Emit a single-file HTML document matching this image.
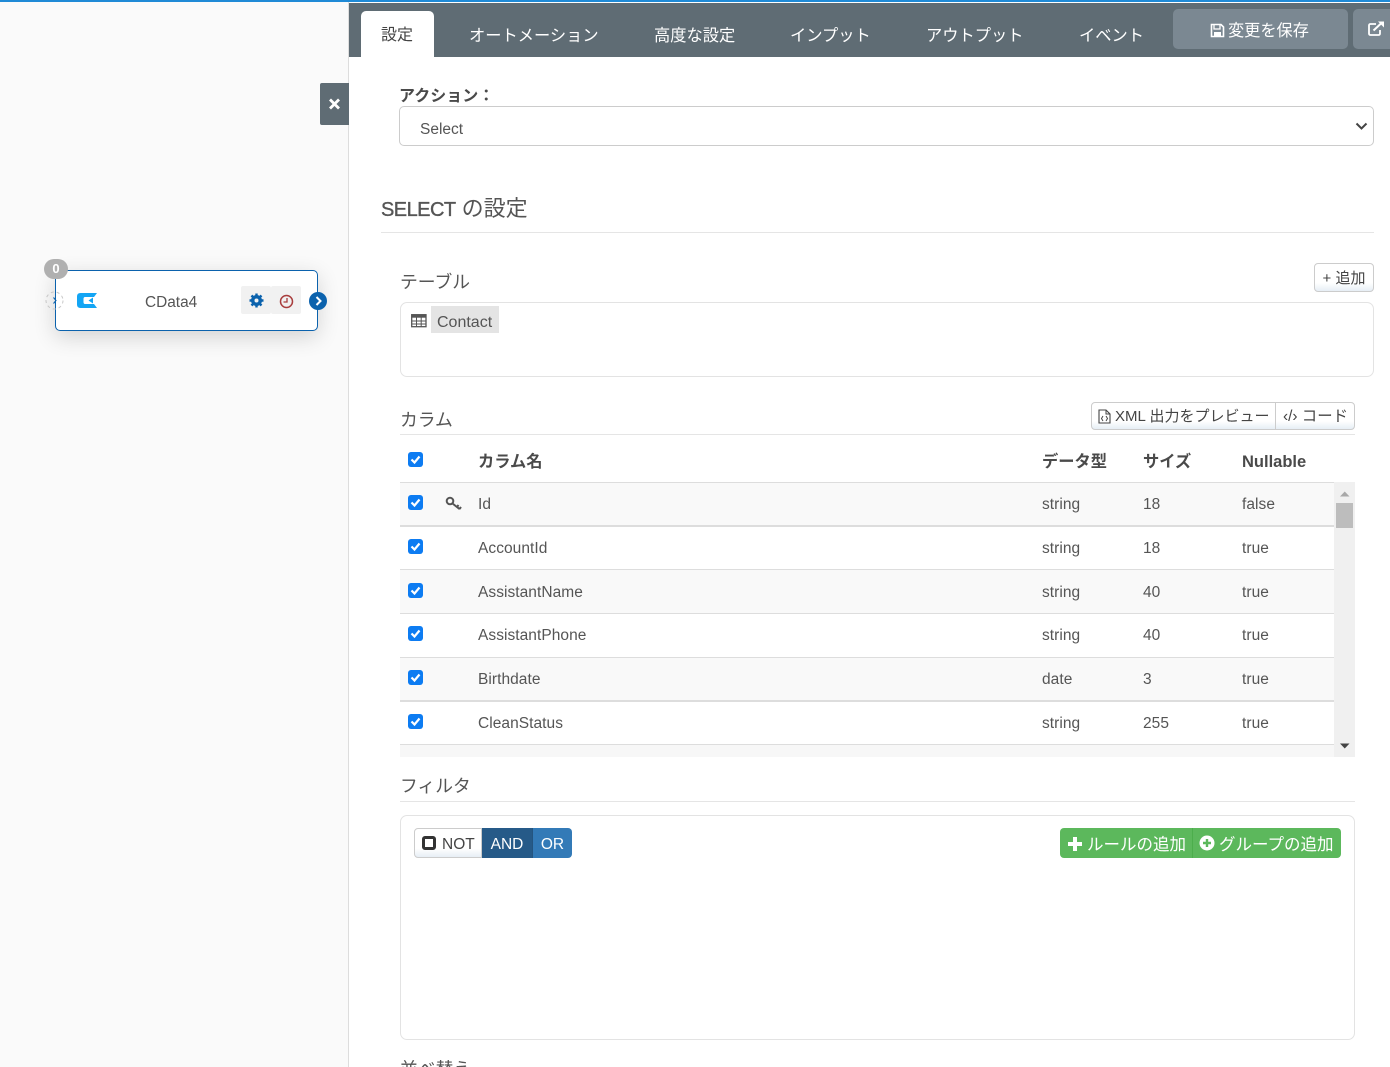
<!DOCTYPE html>
<html lang="ja"><head><meta charset="utf-8"><title>CData</title>
<style>
*{box-sizing:border-box}
html{margin:0;padding:0;width:1390px;height:1067px;overflow:hidden}
body{margin:0;padding:0;width:1390px;height:1067px;position:relative;overflow:hidden;background:#fff;color:#555;font-family:"Liberation Sans","Noto Sans CJK JP",sans-serif;font-size:15px}
.a{position:absolute;white-space:nowrap}
.tab{position:absolute;top:26px;color:#fff;font-size:16.25px;line-height:20px;white-space:nowrap}
.lbl{position:absolute;font-size:17.8px;line-height:24px;color:#555;white-space:nowrap}
.hr{position:absolute;height:1px;background:#e5e5e5}
.box{position:absolute;background:#fff;border:1px solid #e3e3e3;border-radius:7px}
.cb{position:absolute;left:408px;width:15px;height:15px;background:#0d7cf2;border-radius:3px}
.cb svg{position:absolute;left:0;top:0}
.row{position:absolute;left:400px;width:934px;border-bottom:1px solid #ddd}
.t{position:absolute;font-size:15.5px;line-height:20px;color:#555;white-space:nowrap;letter-spacing:.05px}
.th{position:absolute;font-size:16.25px;line-height:20px;font-weight:bold;color:#4a4a4a;white-space:nowrap}
.btn{position:absolute;background:linear-gradient(#fff 70%,#e6eef5);border:1px solid #ccc;color:#444;white-space:nowrap}
</style></head><body>

<!-- left canvas -->
<div class="a" style="left:0;top:0;width:349px;height:1067px;background:#fafafa;border-right:1px solid #ddd"></div>
<div class="a" style="left:0;top:0;width:1390px;height:2px;background:#1f8ad6"></div>

<div class="a" style="left:320px;top:83px;width:29px;height:42px;background:#5f6c74;border-radius:2px 0 0 2px">
<svg width="29" height="42" style="position:absolute;left:0;top:0"><path d="M10 16.500L19 25.500M19 16.500L10 25.500" stroke="#fff" stroke-width="2.800" fill="none"/></svg></div>

<!-- node -->
<div class="a" style="left:55px;top:270px;width:263px;height:61px;background:#fff;border:1px solid #0b62ad;border-radius:5px;box-shadow:0 6px 22px rgba(0,0,0,.16)"></div>
<div class="a" style="left:44px;top:259px;width:24px;height:20px;border-radius:10px;background:#b0b0b0;color:#fff;font-size:13px;font-weight:bold;line-height:20px;text-align:center">0</div>
<svg class="a" style="left:45px;top:291px" width="20" height="20"><circle cx="9.500" cy="9.500" r="8.500" fill="none" stroke="#c8c8c8" stroke-dasharray="3 3"/><path d="M8.500 6.500L11 9.500L8.500 12.500" stroke="#0b62ad" stroke-width="1.100" fill="none"/></svg>
<svg class="a" style="left:76px;top:292px" width="22" height="18"><path d="M4.500 1H21L18 5H9Q7.500 5 7.500 7V10Q7.500 12 9 12H18L21 16H4.500Q1 16 1 12.500V4.500Q1 1 4.500 1Z" fill="#13a5f4"/><path d="M12.500 8.500L17 5.500V11.500Z" fill="#13a5f4"/></svg>
<div class="a" style="left:145px;top:293px;font-size:15.4px;line-height:19px;color:#555">CData4</div>
<div class="a" style="left:241px;top:286px;width:30px;height:28px;background:#f1f1f1;border-radius:2px"></div>
<div class="a" style="left:271px;top:286px;width:30px;height:28px;background:#f1f1f1;border-radius:2px"></div>
<svg class="a" style="left:249px;top:293px" width="15" height="15" viewBox="0 0 15 15"><circle cx="7.500" cy="7.500" r="4" fill="none" stroke="#0b62ad" stroke-width="3"/><path d="M7.500 .5V14.500M.5 7.500H14.500M2.500 2.500L12.500 12.500M12.500 2.500L2.500 12.500" stroke="#0b62ad" stroke-width="2.400"/><circle cx="7.500" cy="7.500" r="2" fill="#f1f1f1"/></svg>
<svg class="a" style="left:279px;top:294px" width="15" height="15" viewBox="0 0 15 15"><circle cx="7.500" cy="7.500" r="6" fill="none" stroke="#a83c3c" stroke-width="1.500"/><path d="M8 4V8H4.500" fill="none" stroke="#a83c3c" stroke-width="1.300"/></svg>
<svg class="a" style="left:309px;top:292px" width="18" height="18"><circle cx="9" cy="9" r="9" fill="#0b62ad"/><path d="M7.500 5L11.500 9L7.500 13" stroke="#fff" stroke-width="2" fill="none"/></svg>

<!-- tab bar -->
<div class="a" style="left:349px;top:3px;width:1041px;height:54px;background:#5f6c74"></div>
<div class="a" style="left:361px;top:11px;width:73px;height:46px;background:#fff;border-radius:5px 5px 0 0"></div>
<div class="tab" style="left:381px;color:#444;font-size:16px">設定</div>
<div class="tab" style="left:469px">オートメーション</div>
<div class="tab" style="left:654px">高度な設定</div>
<div class="tab" style="left:790px">インプット</div>
<div class="tab" style="left:926px">アウトプット</div>
<div class="tab" style="left:1079px">イベント</div>
<div class="a" style="left:1173px;top:9px;width:175px;height:40px;background:#7b8892;border-radius:5px"></div>
<svg class="a" style="left:1210px;top:23px" width="15" height="15" viewBox="0 0 15 15"><path d="M1.500 1.500H11L13.500 4V13.500H1.500Z" fill="none" stroke="#fff" stroke-width="1.600"/><path d="M4 2V6H10V2" fill="none" stroke="#fff" stroke-width="1.300"/><rect x="4" y="9" width="7" height="4" fill="#fff"/></svg>
<div class="a" style="left:1228px;top:21px;color:#fff;font-size:16.2px;line-height:20px">変更を保存</div>
<div class="a" style="left:1353px;top:9px;width:37px;height:40px;background:#7b8892;border-radius:5px 0 0 5px"></div>
<svg class="a" style="left:1368px;top:21px" width="17" height="15" viewBox="0 0 17 15"><path d="M8 3H2.500Q1 3 1 4.500V12.500Q1 14 2.500 14H10.500Q12 14 12 12.500V9" fill="none" stroke="#fff" stroke-width="1.800"/><path d="M5.500 9.500L13 2.500" stroke="#fff" stroke-width="2"/><path d="M10 .5H16V6.500Z" fill="#fff"/></svg>

<!-- action -->
<div class="a" style="left:399px;top:86px;font-size:16px;line-height:21px;font-weight:bold;color:#4a4a4a">アクション：</div>
<div class="a" style="left:399px;top:106px;width:975px;height:40px;border:1px solid #ccc;border-radius:5px;background:#fff"></div>
<div class="a" style="left:420px;top:120px;font-size:15.500px;line-height:20px;color:#555">Select</div>
<svg class="a" style="left:1355px;top:122px" width="13" height="9"><path d="M1.500 1.500L6.500 6.500L11.500 1.500" stroke="#444" stroke-width="2" fill="none"/></svg>

<div class="a" style="left:381px;top:194px;font-size:22px;line-height:29px;color:#555"><span style="font-size:20px;letter-spacing:-.55px;-webkit-text-stroke:.35px #555">SELECT</span> の設定</div>
<div class="hr" style="left:381px;top:232px;width:993px"></div>

<!-- table -->
<div class="lbl" style="left:400px;top:270px">テーブル</div>
<div class="btn" style="left:1314px;top:263px;width:60px;height:29px;border-radius:4px;font-size:15px;line-height:29px;text-align:center">+ 追加</div>
<div class="box" style="left:400px;top:302px;width:974px;height:75px"></div>
<svg class="a" style="left:411px;top:314px" width="16" height="14" viewBox="0 0 16 14"><rect x=".7" y=".7" width="14.300" height="12" fill="none" stroke="#555" stroke-width="1.300"/><rect x=".7" y=".7" width="14.300" height="3" fill="#555"/><path d="M.7 7H15M.7 10H15M5.500 3V13M10.200 3V13" stroke="#555" stroke-width="1"/></svg>
<div class="a" style="left:431px;top:306px;width:68px;height:27px;background:#e4e4e4;color:#555;font-size:16px;line-height:31px;padding-left:6px;overflow:hidden"><span style="position:relative;top:1px">Contact</span></div>

<!-- columns -->
<div class="lbl" style="left:400px;top:408px">カラム</div>
<div class="btn" style="left:1091px;top:402px;width:185px;height:28px;border-radius:4px 0 0 4px;font-size:15px;line-height:28px;padding-left:23px">XML 出力をプレビュー</div>
<svg class="a" style="left:1098px;top:409px" width="13" height="15" viewBox="0 0 13 15"><path d="M1 1H8L12 5V14H1Z" fill="none" stroke="#444" stroke-width="1.100"/><path d="M8 1V5H12M5 7L3.500 9.500L5 12M8 7L9.500 9.500L8 12" fill="none" stroke="#444" stroke-width="1"/></svg>
<div class="btn" style="left:1275px;top:402px;width:80px;height:28px;border-radius:0 4px 4px 0;font-size:15.4px;line-height:28px;padding-left:7px">‹/› コード</div>
<div class="hr" style="left:400px;top:434px;width:955px"></div>

<div class="cb" style="top:452px"><svg width="15" height="15"><path d="M3.500 7.500L6.500 10.500L11.500 4.500" stroke="#fff" stroke-width="2.200" fill="none"/></svg></div>
<div class="th" style="left:478px;top:452px">カラム名</div>
<div class="th" style="left:1042px;top:452px">データ型</div>
<div class="th" style="left:1143px;top:452px">サイズ</div>
<div class="th" style="left:1242px;top:452px;font-size:16.5px">Nullable</div>

<div class="a" style="left:400px;top:482px;width:934px;height:1px;background:#ddd"></div>
<div class="row" style="top:483px;height:44px;background:#f9f9f9;border-bottom:2px solid #ddd"></div>
<div class="row" style="top:527px;height:43px"></div>
<div class="row" style="top:570px;height:44px;background:#f9f9f9"></div>
<div class="row" style="top:614px;height:44px"></div>
<div class="row" style="top:658px;height:44px;background:#f9f9f9;border-bottom:2px solid #ddd"></div>
<div class="row" style="top:702px;height:43px"></div>
<div class="a" style="left:400px;top:745px;width:934px;height:12px;background:#f7f7f7"></div>
<div class="a" style="left:1334px;top:482px;width:21px;height:275px;background:#f0f0f0"></div>
<div class="a" style="left:1336px;top:503px;width:17px;height:25px;background:#bdbdbd"></div>
<svg class="a" style="left:1340px;top:491px" width="10" height="6"><path d="M0 5.500H9.500L4.750 .5Z" fill="#a8a8a8"/></svg>
<svg class="a" style="left:1340px;top:743px" width="10" height="6"><path d="M0 .5H9.500L4.750 5.500Z" fill="#444"/></svg>

<div class="cb" style="top:495px"><svg width="15" height="15"><path d="M3.500 7.500L6.500 10.500L11.500 4.500" stroke="#fff" stroke-width="2.200" fill="none"/></svg></div>
<svg class="a" style="left:445px;top:496px" width="17" height="15" viewBox="0 0 17 15"><circle cx="5" cy="5" r="3.300" fill="none" stroke="#555" stroke-width="2"/><path d="M7.500 7.500L14.500 13M12 11L13.500 9M14.500 13L16 11" fill="none" stroke="#555" stroke-width="2"/></svg>
<div class="t" style="left:478px;top:495px">Id</div><div class="t" style="left:1042px;top:495px">string</div><div class="t" style="left:1143px;top:495px">18</div><div class="t" style="left:1242px;top:495px">false</div>

<div class="cb" style="top:539px"><svg width="15" height="15"><path d="M3.500 7.500L6.500 10.500L11.500 4.500" stroke="#fff" stroke-width="2.200" fill="none"/></svg></div>
<div class="t" style="left:478px;top:539px">AccountId</div><div class="t" style="left:1042px;top:539px">string</div><div class="t" style="left:1143px;top:539px">18</div><div class="t" style="left:1242px;top:539px">true</div>

<div class="cb" style="top:583px"><svg width="15" height="15"><path d="M3.500 7.500L6.500 10.500L11.500 4.500" stroke="#fff" stroke-width="2.200" fill="none"/></svg></div>
<div class="t" style="left:478px;top:583px">AssistantName</div><div class="t" style="left:1042px;top:583px">string</div><div class="t" style="left:1143px;top:583px">40</div><div class="t" style="left:1242px;top:583px">true</div>

<div class="cb" style="top:626px"><svg width="15" height="15"><path d="M3.500 7.500L6.500 10.500L11.500 4.500" stroke="#fff" stroke-width="2.200" fill="none"/></svg></div>
<div class="t" style="left:478px;top:626px">AssistantPhone</div><div class="t" style="left:1042px;top:626px">string</div><div class="t" style="left:1143px;top:626px">40</div><div class="t" style="left:1242px;top:626px">true</div>

<div class="cb" style="top:670px"><svg width="15" height="15"><path d="M3.500 7.500L6.500 10.500L11.500 4.500" stroke="#fff" stroke-width="2.200" fill="none"/></svg></div>
<div class="t" style="left:478px;top:670px">Birthdate</div><div class="t" style="left:1042px;top:670px">date</div><div class="t" style="left:1143px;top:670px">3</div><div class="t" style="left:1242px;top:670px">true</div>

<div class="cb" style="top:714px"><svg width="15" height="15"><path d="M3.500 7.500L6.500 10.500L11.500 4.500" stroke="#fff" stroke-width="2.200" fill="none"/></svg></div>
<div class="t" style="left:478px;top:714px">CleanStatus</div><div class="t" style="left:1042px;top:714px">string</div><div class="t" style="left:1143px;top:714px">255</div><div class="t" style="left:1242px;top:714px">true</div>

<!-- filter -->
<div class="lbl" style="left:400px;top:774px">フィルタ</div>
<div class="hr" style="left:400px;top:801px;width:955px"></div>
<div class="box" style="left:400px;top:815px;width:955px;height:225px"></div>
<div class="btn" style="left:414px;top:828px;width:68px;height:30px;border-radius:4px 0 0 4px;font-size:15.500px;line-height:31px;padding-left:27px">NOT</div>
<div class="a" style="left:422px;top:836px;width:14px;height:14px;border:3px solid #333;border-radius:3px;background:#fff"></div>
<div class="a" style="left:482px;top:828px;width:51px;height:30px;background:#265a88;color:#fff;font-size:15.500px;line-height:33px;text-align:center;border-right:1px solid #245580">AND</div>
<div class="a" style="left:533px;top:828px;width:39px;height:30px;background:#337ab7;color:#fff;font-size:15.500px;line-height:33px;text-align:center;border-radius:0 4px 4px 0">OR</div>

<div class="a" style="left:1060px;top:828px;width:281px;height:30px;background:#5cb85c;border-radius:4px"></div>
<div class="a" style="left:1192px;top:828px;width:1px;height:30px;background:#4cae4c"></div>
<svg class="a" style="left:1067px;top:836px" width="16" height="16"><path d="M8 1V15M1 8H15" stroke="#fff" stroke-width="4"/></svg>
<div class="a" style="left:1087px;top:834px;color:#fff;font-size:16.500px;line-height:22px">ルールの追加</div>
<svg class="a" style="left:1199px;top:835px" width="16" height="16"><circle cx="8" cy="8" r="7.500" fill="#fff"/><path d="M8 4V12M4 8H12" stroke="#5cb85c" stroke-width="2.400"/></svg>
<div class="a" style="left:1219px;top:834px;color:#fff;font-size:16.500px;line-height:22px">グループの追加</div>

<div class="lbl" style="left:400px;top:1057px">並べ替え</div>
</body></html>
